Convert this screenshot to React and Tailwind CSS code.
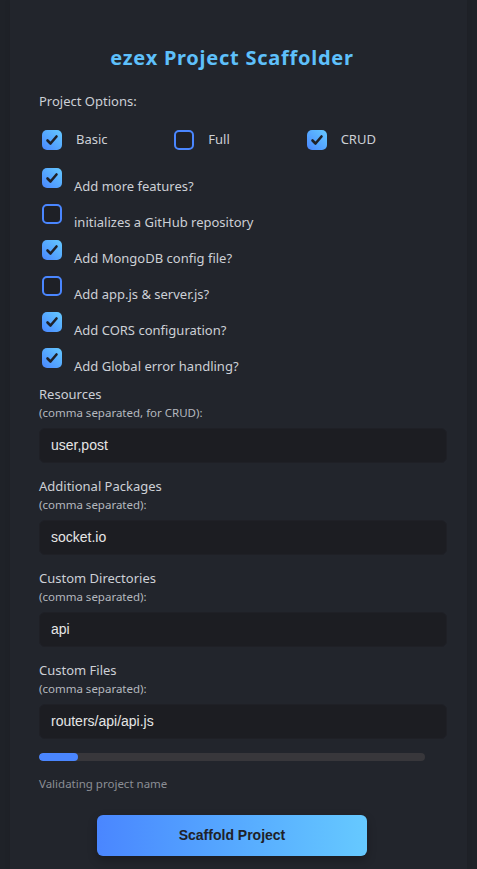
import React from 'react'

const features = [
  { label: 'Add more features?', checked: true },
  { label: 'initializes a GitHub repository', checked: false },
  { label: 'Add MongoDB config file?', checked: true },
  { label: 'Add app.js & server.js?', checked: false },
  { label: 'Add CORS configuration?', checked: true },
  { label: 'Add Global error handling?', checked: true },
]

const fields = [
  { label: 'Resources', hint: '(comma separated, for CRUD):', value: 'user,post' },
  { label: 'Additional Packages', hint: '(comma separated):', value: 'socket.io' },
  { label: 'Custom Directories', hint: '(comma separated):', value: 'api' },
  { label: 'Custom Files', hint: '(comma separated):', value: 'routers/api/api.js' },
]

function Box({ checked }) {
  if (checked) {
    return (
      <span className="w-[20px] h-[20px] shrink-0 rounded-[5px] bg-gradient-to-tr from-[#4a86ff] to-[#66c9ff] flex items-center justify-center">
        <svg width="14" height="14" viewBox="0 0 14 14" fill="none">
          <path d="M2.5 7.5 L5.5 10.5 L11.5 3.5" stroke="#1f2128" strokeWidth="2.6" strokeLinecap="round" strokeLinejoin="round" />
        </svg>
      </span>
    )
  }
  return <span className="w-[20px] h-[20px] shrink-0 rounded-[5px] border-2 border-[#4a86ff] bg-[#1e2026]" />
}

export default function App() {
  return (
    <div className="min-h-screen bg-[#1f2228] font-['Segoe_UI','Noto_Sans',sans-serif]">
      <div className="mx-[10px] min-h-[869px] bg-[#22252c] shadow-[0_0_6px_rgba(0,0,0,0.08)] pl-[29px] pr-[20px] pt-[44px] pb-[12px]">
        <div className="w-[386px]">
          <h1 className="text-center text-[20px] leading-[28px] font-bold tracking-[0.75px] text-[#5ec0fb] font-['Noto_Sans',sans-serif]">
            ezex Project Scaffolder
          </h1>
        </div>

        <p className="mt-[20px] text-[13px] leading-[18px] text-[#cdd0d6]">Project Options:</p>

        <div className="mt-[20px] w-[400px] grid grid-cols-3 pl-[3px]">
          {[['Basic', true], ['Full', false], ['CRUD', true]].map(([name, on]) => (
            <label key={name} className="flex items-center gap-[14px]">
              <Box checked={on} />
              <span className="text-[13px] text-[#cdd0d6]">{name}</span>
            </label>
          ))}
        </div>

        <div className="mt-[18px] flex flex-col gap-[16px] pl-[3px]">
          {features.map((f) => (
            <label key={f.label} className="flex items-start gap-[12px] h-[20px]">
              <Box checked={f.checked} />
              <span className="text-[13px] leading-[18px] pt-[9px] text-[#cdd0d6]">{f.label}</span>
            </label>
          ))}
        </div>

        <div className="mt-[17px] flex flex-col gap-[14px]">
          {fields.map((f) => (
            <div key={f.label}>
              <p className="text-[13px] leading-[19px] text-[#cdd0d6]">{f.label}</p>
              <p className="text-[11.5px] leading-[18px] text-[#b4b8bf]">{f.hint}</p>
              <div className="mt-[6px] h-[35px] rounded-[6px] bg-[#1c1d22] border border-[#1f2026] flex items-center px-[11px]">
                <span className="text-[14px] text-[#e6e6e6] font-['Liberation_Sans',Arial,sans-serif]">{f.value}</span>
              </div>
            </div>
          ))}
        </div>

        <div className="mt-[14px] w-[386px] h-[8px] rounded-full bg-[#38373b] overflow-hidden">
          <div className="h-full rounded-full bg-[#4a86ff]" style={{ width: '10%' }} />
        </div>
        <p className="mt-[15px] text-[11.5px] leading-[16px] text-[#8b8e95]">Validating project name</p>

        <div className="mt-[23px] w-[386px] flex justify-center">
          <button className="w-[270px] h-[41px] rounded-[6px] bg-gradient-to-r from-[#4a86ff] to-[#66c9ff] text-[14px] font-bold text-[#1f2128] font-['Liberation_Sans',Arial,sans-serif] shadow-[0_4px_10px_rgba(0,0,0,0.25)]">
            Scaffold Project
          </button>
        </div>
      </div>
    </div>
  )
}
